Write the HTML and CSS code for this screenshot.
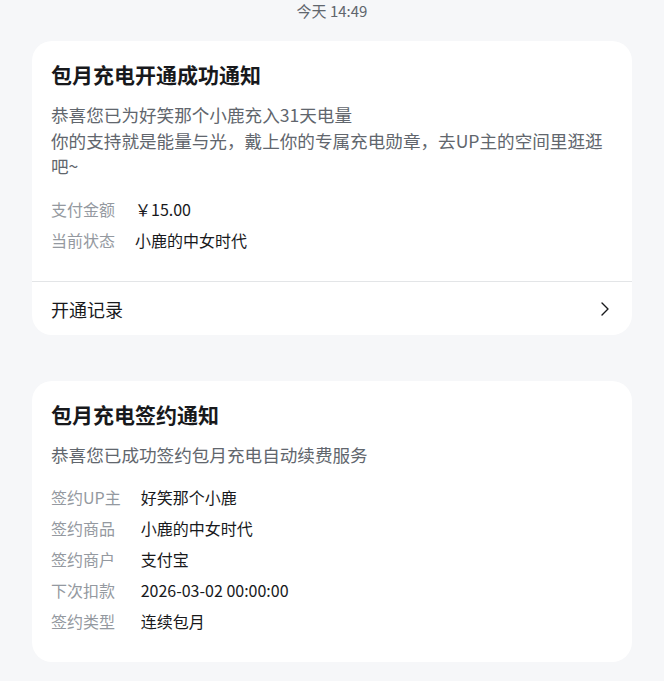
FILE: index.html
```html
<!DOCTYPE html>
<html lang="zh-CN">
<head>
<meta charset="utf-8">
<title>通知</title>
<link rel="stylesheet" href="styles.css">
</head>
<body>
<div class="page">
  <div class="time">今天 14:49</div>

  <div class="card">
    <div class="card-body">
      <div class="title">包月充电开通成功通知</div>
      <div class="desc">恭喜您已为好笑那个小鹿充入31天电量<br>你的支持就是能量与光，戴上你的专属充电勋章，去UP主的空间里逛逛吧~</div>
      <div class="rows">
        <div class="label">支付金额</div><div class="value">￥15.00</div>
        <div class="label">当前状态</div><div class="value">小鹿的中女时代</div>
      </div>
    </div>
    <div class="footer">
      <span class="footer-text">开通记录</span>
      <svg class="chevron" width="8" height="14" viewBox="0 0 8 14"><path d="M1 1 L7 7 L1 13" fill="none" stroke="#18191c" stroke-width="1.4" stroke-linecap="round" stroke-linejoin="round"/></svg>
    </div>
  </div>

  <div class="card card-2">
    <div class="card-body">
      <div class="title">包月充电签约通知</div>
      <div class="desc">恭喜您已成功签约包月充电自动续费服务</div>
      <div class="rows">
        <div class="label">签约UP主</div><div class="value">好笑那个小鹿</div>
        <div class="label">签约商品</div><div class="value">小鹿的中女时代</div>
        <div class="label">签约商户</div><div class="value">支付宝</div>
        <div class="label">下次扣款</div><div class="value">2026-03-02 00:00:00</div>
        <div class="label">签约类型</div><div class="value">连续包月</div>
      </div>
    </div>
  </div>
</div>
</body>
</html>
```

FILE: styles.css
```css
html, body {
  margin: 0;
  padding: 0;
  background: #f6f7f9;
}
body {
  font-family: "Noto Sans CJK SC", "Noto Sans", "Liberation Sans", sans-serif;
  color: #18191c;
}
.page {
  padding: 0 32px;
}
.time {
  text-align: center;
  font-size: 15px;
  line-height: 21px;
  color: #61666d;
  margin-bottom: 20px;
}
.card {
  background: #ffffff;
  border-radius: 20px;
  overflow: hidden;
}
.card-2 {
  margin-top: 46px;
}
.card-body {
  padding: 20px 19px 25px 19px;
}
.title {
  font-size: 21px;
  line-height: 27px;
  font-weight: 700;
  color: #18191c;
}
.desc {
  margin-top: 14px;
  font-size: 17.6px;
  line-height: 25.5px;
  color: #61666d;
}
.rows {
  margin-top: 15px;
  display: grid;
  grid-template-columns: max-content 1fr;
  column-gap: 20px;
  font-size: 16px;
  line-height: 31px;
}
.label {
  color: #9499a0;
}
.value {
  color: #18191c;
}
.footer {
  border-top: 1px solid #e3e5e7;
  height: 53px;
  padding: 0 23px 0 19px;
  display: flex;
  align-items: center;
  justify-content: space-between;
}
.footer-text {
  font-size: 18px;
  line-height: 24px;
  padding-top: 2px;
}
.chevron {
  display: block;
  margin-top: 2px;
}
```
